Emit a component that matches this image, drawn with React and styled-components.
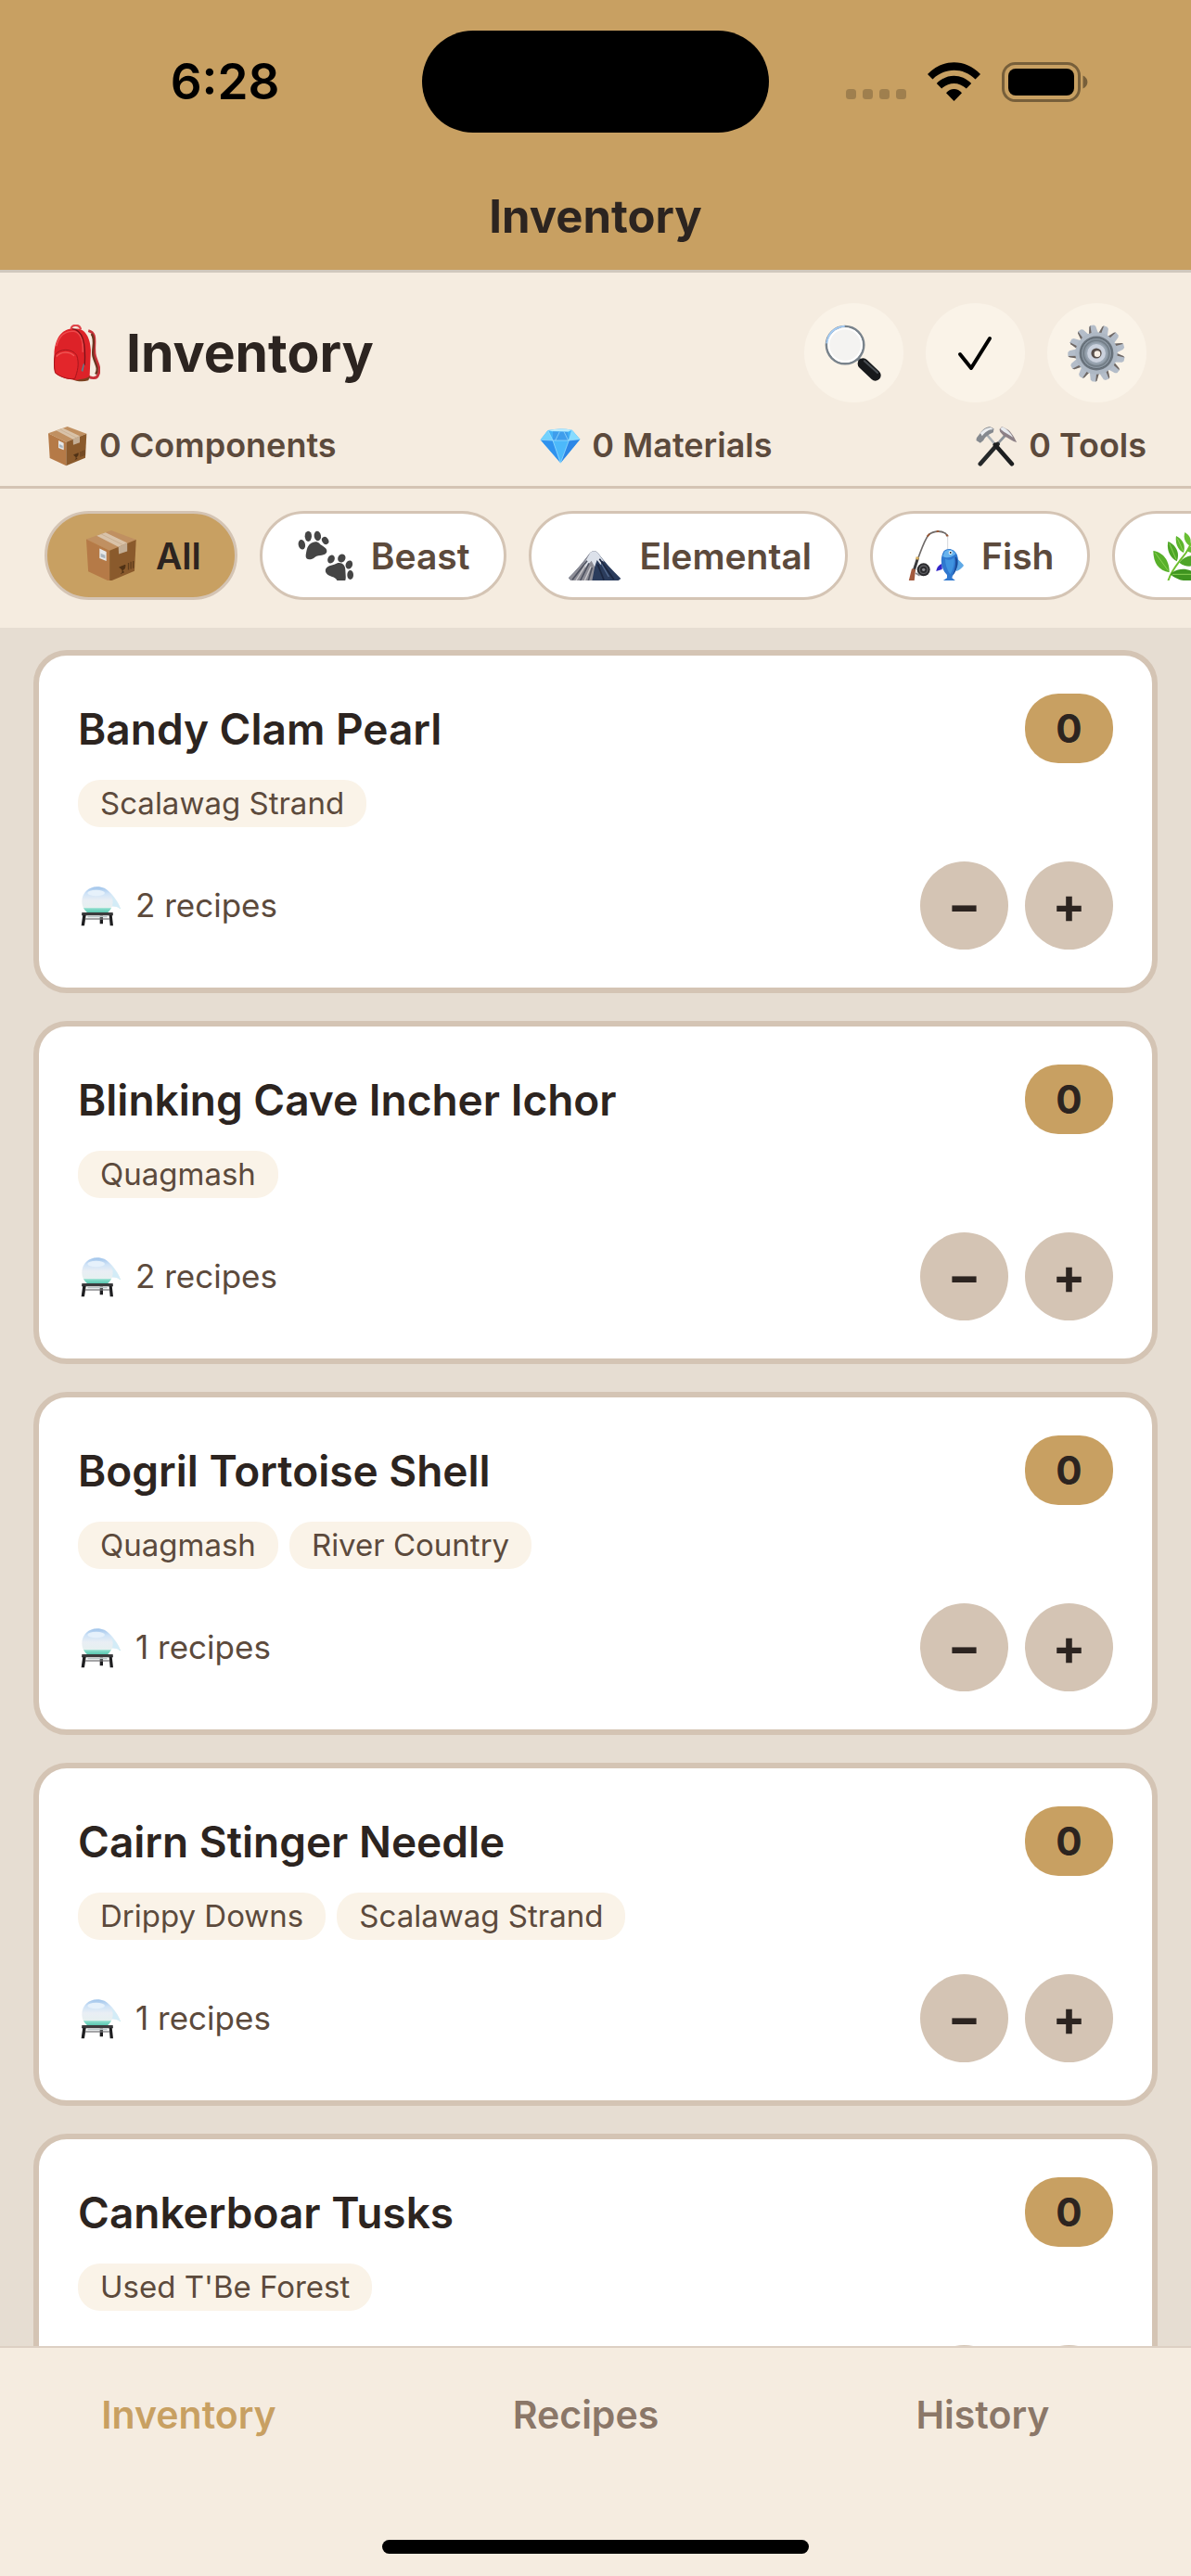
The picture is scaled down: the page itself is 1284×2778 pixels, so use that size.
import React, { useState } from 'react'
import styled, { createGlobalStyle } from 'styled-components'

const GlobalStyle = createGlobalStyle`
  * {
    box-sizing: border-box;
  }

  body {
    margin: 0;
    background-color: #e6ddd2;
    color: #2c2420;
    font-family: Inter, 'Liberation Sans', sans-serif;
  }

  button {
    border: none;
    padding: 0;
    font: inherit;
    color: inherit;
    cursor: pointer;
  }

  svg {
    display: block;
    flex: none;
  }
`

const Screen = styled.div`
  display: flex;
  flex-direction: column;
  height: 100vh;
`

const TopBar = styled.header`
  flex: none;
  background-color: #c8a062;
  border-bottom: 3px solid #d0c8be;
`

const StatusBar = styled.div`
  display: grid;
  grid-template-columns: 1fr 374px 1fr;
  align-items: center;
  height: 176px;
  color: #000;
`

const Clock = styled.span`
  padding-left: 30px;
  text-align: center;
  font-size: 53px;
  font-weight: 600;
  line-height: 60px;
`

const Island = styled.div`
  height: 110px;
  border-radius: 55px;
  background-color: #000;
`

const StatusIcons = styled.div`
  display: flex;
  justify-content: flex-end;
  align-items: center;
  gap: 23px;
  padding-right: 111px;
`

const ScreenTitle = styled.h1`
  margin: 0;
  padding: 28px 0 27px;
  text-align: center;
  font-size: 49px;
  font-weight: 700;
  line-height: 60px;
`

const Summary = styled.section`
  flex: none;
  padding: 33px 48px 21px;
  background-color: #f5ece0;
  border-bottom: 3px solid #d4c4b4;
`

const SummaryRow = styled.div`
  display: flex;
  justify-content: space-between;
  align-items: center;
`

const SummaryTitle = styled.h2`
  display: flex;
  align-items: center;
  gap: 28px;
  margin: 0;
  padding-left: 10px;
  font-size: 57px;
  font-weight: 700;
  line-height: 72px;
`

const Actions = styled.div`
  display: flex;
  gap: 24px;
`

const RoundButton = styled.button`
  display: flex;
  justify-content: center;
  align-items: center;
  width: 107px;
  height: 107px;
  padding-right: 2px;
  border-radius: 50%;
  background-color: #faf3e8;
`

const Stats = styled(SummaryRow)`
  padding: 24px 0 0 3px;
`

const Stat = styled.span`
  display: flex;
  align-items: center;
  gap: 12px;
  color: #5c4a3c;
  font-size: 36px;
  font-weight: 600;
  line-height: 45px;
`

const Filters = styled.nav`
  display: flex;
  flex: none;
  gap: 24px;
  padding: 24px 48px 30px;
  overflow: hidden;
  background-color: #f5ece0;
`

const Pill = styled.button`
  display: flex;
  flex: none;
  align-items: center;
  gap: 15px;
  height: 96px;
  padding: 0 36px;
  border: 3px solid #d4c4b4;
  border-radius: 48px;
  background-color: ${props => (props.$active ? '#c8a062' : '#fff')};
  color: ${props => (props.$active ? '#2c2420' : '#5c4a3c')};
  font-size: 39px;
  font-weight: 600;
`

const List = styled.main`
  display: flex;
  flex: 1;
  flex-direction: column;
  gap: 30px;
  min-height: 0;
  padding: 24px 36px;
  overflow: hidden;
`

const Card = styled.article`
  flex: none;
  padding: 41px 42px;
  border: 6px solid #d4c4b4;
  border-radius: 36px;
  background-color: #fff;
`

const CardRow = styled.div`
  display: flex;
  justify-content: space-between;
  align-items: center;
`

const CardTitle = styled.h3`
  margin: 0;
  font-size: 46px;
  font-weight: 600;
  line-height: 60px;
`

const Count = styled.span`
  min-width: 95px;
  padding: 0 24px;
  border-radius: 36px;
  background-color: #c8a062;
  text-align: center;
  font-size: 42px;
  font-weight: 700;
  line-height: 75px;
`

const Tags = styled.div`
  display: flex;
  gap: 12px;
  padding: 18px 0 37px;
`

const Tag = styled.span`
  padding: 0 24px;
  border-radius: 24px;
  background-color: #faf3e8;
  color: #5c4a3c;
  font-size: 33px;
  line-height: 51px;
`

const Recipes = styled.span`
  display: flex;
  align-items: center;
  gap: 15px;
  padding-left: 3px;
  color: #5c4a3c;
  font-size: 35px;
  line-height: 45px;
`

const Stepper = styled.div`
  display: flex;
  gap: 18px;
`

const StepButton = styled.button`
  width: 95px;
  height: 95px;
  border-radius: 50%;
  background-color: #d4c4b4;
  font-size: 53px;
  font-weight: 700;
  line-height: 95px;
`

const TabBar = styled.nav`
  flex: none;
  padding-top: 42px;
  border-top: 2px solid #ddd0c3;
  background-color: #f5ece0;
`

const Tabs = styled.div`
  display: flex;
`

const TabLink = styled.a`
  flex: 1;
  padding-right: 21px;
  color: ${props => (props.$active ? '#c8a062' : '#8b7768')};
  text-align: center;
  text-decoration: none;
  font-size: 41px;
  font-weight: 600;
  line-height: 60px;
`

const HomeIndicator = styled.div`
  width: 460px;
  height: 15px;
  margin: 105px auto 24px;
  border-radius: 8px;
  background-color: #000;
`

const CellIcon = () => (
  <svg width="65" height="42" viewBox="0 0 65 42" fill="#000" opacity="0.2">
    {[0, 18, 36, 54].map(x => (
      <rect key={x} x={x} y="29" width="11" height="11" rx="3.5" />
    ))}
  </svg>
)

const WifiIcon = () => (
  <svg width="57" height="42" viewBox="0 0 57 42">
    <path d="M0 13C16-4 41-4 57 13L51.500 18.500C38.500 5.500 18.500 5.500 5.500 18.500Z" />
    <path d="M9.800 23C20.500 12 36.500 12 47.200 23L41.800 28.500C34 21 23 21 15.200 28.500Z" />
    <path d="M20 33.200C24.500 27.500 32.500 27.500 37 33.200L28.500 42Z" />
  </svg>
)

const BatteryIcon = () => (
  <svg width="93" height="43" viewBox="0 0 93 43">
    <g opacity="0.4">
      <rect x="1.500" y="1.500" width="82" height="40" rx="13" fill="none" stroke="#000" strokeWidth="3" />
      <path d="M87.500 14.500C94 17 94 26 87.500 28.500Z" />
    </g>
    <rect x="7" y="7" width="71" height="29" rx="8" />
  </svg>
)

const BackpackIcon = () => (
  <svg width="50" height="62" viewBox="0 0 150 187">
    <path d="M112 20C146 28 124 72 134 104C140 126 154 142 143 165C139 176 124 175 114 171" fill="none" stroke="#c8323a" strokeWidth="9" />
    <path d="M122 30C138 50 122 80 128 104C134 128 148 142 136 162" fill="none" stroke="#6b3520" strokeWidth="7" />
    <path d="M56 16C56-2 84-2 87 16" fill="none" stroke="#e0464c" strokeWidth="7" />
    <path d="M62 170L118 166L112 182C92 188 70 184 60 178Z" fill="#7a3f1e" />
    <path d="M1 98C2 50 24 12 64 14C102 8 118 42 120 84L116 168C106 178 88 176 78 180C52 180 20 172 4 158C-1 142 0 118 1 98Z" fill="#dd2228" />
    <path d="M8 70C18 30 44 20 66 22C90 28 96 54 94 90" fill="none" stroke="#ee4a4c" strokeWidth="5" />
    <path d="M60 14C94 18 104 58 100 132" fill="none" stroke="#7c1218" strokeWidth="4" />
    <path d="M4 98C18 78 58 76 74 100C84 128 76 154 68 176C44 180 16 168 4 156C0 138 0 116 4 98Z" fill="#e3262b" stroke="#a5161c" strokeWidth="3" />
    <path d="M8 104C22 88 50 86 66 102" fill="none" stroke="#f05a58" strokeWidth="4" />
    <path d="M96 126L99 130L94 154L89 150Z" fill="#5d7f8c" />
  </svg>
)

const PackageShape = () => (
  <g>
    <path d="M0 22L62 0L124 23L58 50Z" fill="#c09061" />
    <path d="M0 22L58 50V127L5 102Z" fill="#b57a47" />
    <path d="M58 50L124 23L120 101L58 127Z" fill="#8a5a2c" />
    <path d="M26 13L48 5L102 31L80 41Z" fill="#d9c3a9" />
    <path d="M37 9L91 36" stroke="#c9ae90" strokeWidth="2" />
    <path d="M80 41L102 31V52L81 59Z" fill="#c3ad94" />
    <path d="M33 45L50 53V76L33 69Z" fill="#e6e8e9" />
    <path d="M36 57L47 62V70L36 66Z" fill="#a9b4bd" />
    <path d="M82 92L97 86C97 94 94 98 90 99V105L94 104M90 105L86 108" fill="#4f3115" stroke="#4f3115" strokeWidth="2" />
    <path d="M105 81V98M111 78V96M117 76V94" stroke="#5f3d1c" strokeWidth="3" />
  </g>
)

const PackageIcon = () => (
  <svg width="44" height="44" viewBox="-3 -3 132 132">
    <PackageShape />
  </svg>
)

const GemIcon = () => (
  <svg width="44" height="44" viewBox="-2 -10 132 132">
    <path d="M0 36L24 5Q64-4 102 4L128 34L65 111Z" fill="#43b4f8" />
    <path d="M24 5L40 38L0 36Z" fill="#72d2fd" />
    <path d="M24 5Q64-4 102 4L88 10L40 9Z" fill="#b6ebff" />
    <path d="M40 9L88 10L92 38L40 38Z" fill="#3e9dec" />
    <path d="M102 4L128 34L92 38Z" fill="#87dcff" />
    <path d="M0 36L40 38L65 111Z" fill="#2f92ee" />
    <path d="M40 38H92L65 111Z" fill="#4cb9fb" />
    <path d="M92 38L128 34L65 111Z" fill="#2c86e6" />
    <path d="M24 5L40 38L65 111L92 38L102 4M0 36L40 38H92L128 34M62 10L48 38M76 10L90 38" fill="none" stroke="#a4e2ff" strokeWidth="2" />
  </svg>
)

const HammersIcon = () => (
  <svg width="45" height="44" viewBox="0 -2 134 132">
    <path d="M96 28L62 66" stroke="#8b9299" strokeWidth="8" />
    <path d="M70 58L14 122" stroke="#25282a" strokeWidth="14" strokeLinecap="round" />
    <path d="M36 28L68 66" stroke="#aab0b5" strokeWidth="8" />
    <path d="M62 60L116 122" stroke="#1c1e20" strokeWidth="14" strokeLinecap="round" />
    <path d="M2 38L14 22C22 10 34 2 46 2L58 8L56 20L44 26C34 32 28 38 24 46L14 54L1 46Z" fill="#85898f" />
    <path d="M14 22C24 10 36 4 48 4L56 10C40 10 28 20 20 32Z" fill="#eceef0" />
    <path d="M76 10L84 1L94 6C110 12 120 28 132 52C118 48 108 40 100 36L90 32L78 18Z" fill="#8c8086" />
    <path d="M80 6L86 2C102 10 112 22 120 36C108 28 94 22 80 10Z" fill="#e7eaee" />
  </svg>
)

const SearchIcon = () => (
  <svg width="62" height="62" viewBox="0 0 188 188">
    <path d="M108 110L120 122" stroke="#737b82" strokeWidth="12" />
    <path d="M126 128L166 166" stroke="#17191b" strokeWidth="36" strokeLinecap="round" />
    <path d="M130 119L173 158" stroke="#4b5055" strokeWidth="6" strokeLinecap="round" />
    <circle cx="67" cy="67" r="61" fill="#f4f3f1" stroke="#79838c" strokeWidth="8" />
    <path d="M7 62C10 32 30 8 66 5" fill="none" stroke="#a6cdf5" strokeWidth="6" />
    <circle cx="67" cy="67" r="54" fill="none" stroke="#fff" strokeWidth="6" />
  </svg>
)

const CheckIcon = () => (
  <svg width="38" height="38" viewBox="0 0 38 38" fill="none" stroke="#000" strokeWidth="4" strokeLinecap="round" strokeLinejoin="round">
    <path d="M3 20L15 35L35 3" />
  </svg>
)

const GearIcon = () => (
  <svg width="62" height="62" viewBox="0 0 188 188">
    {Array.from({ length: 13 }, (_, i) => (
      <g key={i} transform={`rotate(${i * (360 / 13) - 8} 94 94)`}>
        <path d="M78 34L83 6L87 1H99L104 6L110 34Z" fill="#b4bdc9" />
        <path d="M78 34L83 6L87 1L87 34Z" fill="#6f6763" />
      </g>
    ))}
    <circle cx="94" cy="94" r="69" fill="#aeb8c4" />
    <circle cx="94" cy="94" r="56" fill="#6c757e" />
    <circle cx="94" cy="94" r="50" fill="#8d98a3" stroke="#5d6770" strokeWidth="3" />
    <circle cx="94" cy="94" r="42" fill="none" stroke="#737e88" strokeWidth="5" />
    <circle cx="94" cy="94" r="35" fill="#9aa6b3" />
    <circle cx="94" cy="94" r="30" fill="#cbd2de" />
    <circle cx="94" cy="94" r="17" fill="#574e4a" />
    <circle cx="97" cy="96" r="10" fill="#f8efe5" />
  </svg>
)

const FilterSvg = ({ children }) => (
  <svg width="66" height="54" viewBox="0 0 198 162">
    {children}
  </svg>
)

const AllIcon = () => (
  <FilterSvg>
    <g transform="translate(18 0) scale(1.3)">
      <PackageShape />
    </g>
  </FilterSvg>
)

const PawsIcon = () => (
  <FilterSvg>
    <g fill="#454545">
      <path d="M38 54C46 38 66 32 76 42C84 52 102 54 100 70C94 84 76 78 62 86C48 98 30 96 32 80C34 70 34 64 38 54Z" />
      <ellipse cx="19" cy="46" rx="11" ry="16" transform="rotate(-12 19 46)" />
      <ellipse cx="40" cy="19" rx="11" ry="17" />
      <ellipse cx="70" cy="18" rx="11" ry="16" transform="rotate(-8 70 18)" />
      <ellipse cx="95" cy="33" rx="10" ry="13" transform="rotate(-35 95 33)" />
      <path d="M97 124C104 112 122 114 134 106C148 102 160 112 160 128C160 142 164 154 158 166H134C132 148 108 152 98 138C95 134 95 128 97 124Z" />
      <ellipse cx="114" cy="93" rx="11" ry="14" transform="rotate(25 114 93)" />
      <ellipse cx="148" cy="90" rx="12" ry="14" transform="rotate(30 148 90)" />
      <ellipse cx="172" cy="111" rx="11" ry="14" transform="rotate(20 172 111)" />
      <ellipse cx="176" cy="144" rx="10" ry="15" />
    </g>
  </FilterSvg>
)

const MountainIcon = () => (
  <FilterSvg>
    <path d="M12 154C36 130 58 104 82 72Q94 62 106 72C128 102 154 130 181 156L172 163H20Z" fill="#2b3c5c" />
    <path d="M12 154C36 130 58 104 82 72Q94 62 104 70L98 110L88 163H20Z" fill="#8d8d96" />
    <path d="M82 72Q94 62 106 72L128 102L120 98L116 112L104 96L96 118L86 98L66 120L60 112Z" fill="#dce1ea" />
    <path d="M72 98L24 160M78 106L50 162M88 120L76 162" stroke="#4f5361" strokeWidth="5" fill="none" />
    <path d="M68 110L36 162M84 118L64 162" stroke="#c9c8cc" strokeWidth="4" fill="none" />
    <path d="M112 92L158 158M106 110L126 160" stroke="#1c2740" strokeWidth="5" fill="none" />
    <path d="M118 108L142 150" stroke="#566c90" strokeWidth="4" fill="none" />
  </FilterSvg>
)

const FishingIcon = () => (
  <FilterSvg>
    <path d="M36 96C48 66 58 32 72 15C88 0 122-2 134 18" fill="none" stroke="#6f6a68" strokeWidth="5" />
    <path d="M68 20L76 11M98 3H106M130 14L135 20" stroke="#9a5a38" strokeWidth="6" />
    <path d="M134 18V64" stroke="#bfc4c9" strokeWidth="2" />
    <path d="M38 88L24 132" stroke="#3a3a3d" strokeWidth="9" />
    <path d="M37 86L35 94" stroke="#d8b060" strokeWidth="10" />
    <path d="M18 124L30 126L26 164H8Z" fill="#a35a3e" />
    <circle cx="56" cy="127" r="21" fill="#2b2b2e" />
    <circle cx="56" cy="127" r="13" fill="none" stroke="#5e5e62" strokeWidth="4" />
    <circle cx="56" cy="127" r="5" fill="#8b8b90" />
    <path d="M30 138L44 146" stroke="#8a8a8e" strokeWidth="6" />
    <path d="M116 108C102 112 98 124 97 132L116 126Z" fill="#3326c9" />
    <path d="M166 92C176 102 184 108 186 114C178 124 170 130 162 132Z" fill="#5fa9e6" />
    <path d="M122 66C136 54 156 60 164 78C174 102 164 130 150 146L148 154L160 163H118L132 154V144C114 128 106 92 122 66Z" fill="#2f78cf" />
    <path d="M124 68C136 58 152 60 160 76C146 90 130 90 118 84Z" fill="#66b3ee" />
    <path d="M126 92C138 98 150 94 154 88C158 108 150 132 142 142C132 128 126 110 126 92Z" fill="#3f93e0" />
    <path d="M162 86C172 106 162 132 150 146C158 126 162 106 158 86Z" fill="#1b4b98" />
    <circle cx="143" cy="72" r="6" fill="#fff" />
    <circle cx="143" cy="72" r="3" fill="#123" />
  </FilterSvg>
)

const HerbIcon = () => (
  <FilterSvg>
    <path d="M64 164C74 126 108 92 122 72C136 50 146 26 158 0" fill="none" stroke="#6fc02f" strokeWidth="6" />
    <path d="M16 66C42 70 68 90 68 136C34 130 16 106 16 66Z" fill="#58b02a" />
    <path d="M64 36C88 46 104 72 92 100C72 90 58 66 64 36Z" fill="#4da526" />
    <path d="M90 18C110 28 122 46 114 72C96 64 86 42 90 18Z" fill="#5cb52c" />
    <path d="M118 6C134 16 142 30 134 50C120 42 112 26 118 6Z" fill="#68bf34" />
    <path d="M72 142C92 118 140 120 164 150C140 170 96 166 72 142Z" fill="#3f9420" />
    <path d="M100 104C122 78 150 76 178 92C160 118 124 124 100 104Z" fill="#4ea528" />
    <path d="M124 66C140 44 160 38 184 46C174 70 146 80 124 66Z" fill="#66bb32" />
    <path d="M140 32C150 14 164 4 184 6C178 24 160 36 140 32Z" fill="#74c83c" />
    <path d="M22 72L64 130M68 42L90 94M94 26L112 66M78 142H152" stroke="#8ad055" strokeWidth="3" />
  </FilterSvg>
)

const AlembicIcon = () => (
  <svg width="44" height="44" viewBox="0 -2 132 132">
    <defs>
      <linearGradient id="glass" x1="0" y1="0" x2="0" y2="1">
        <stop offset="0" stopColor="#9fc3ea" />
        <stop offset="0.250" stopColor="#cfe3f7" />
        <stop offset="0.500" stopColor="#e9eef4" />
        <stop offset="0.760" stopColor="#e6f0f0" />
        <stop offset="0.800" stopColor="#8addcc" />
        <stop offset="1" stopColor="#45bda4" />
      </linearGradient>
    </defs>
    <path d="M28 90C14 82 4 68 4 50C4 22 26 2 53 2C72 2 84 9 94 20C108 34 124 54 129 74C122 68 112 65 101 66C96 78 88 86 80 90Z" fill="url(#glass)" />
    <ellipse cx="50" cy="22" rx="28" ry="10" fill="#e6f1fb" />
    <path d="M96 24C110 38 124 56 129 74C122 68 112 65 102 65C106 50 104 36 96 24Z" fill="#d3ecf7" />
    <path d="M4 85H104L105 95H3Z" fill="#3b3b3d" />
    <path d="M7 92L2 128H12L17 94M92 94L95 128H105L101 92M62 96V122H72V96" fill="#1d1d1f" />
    <path d="M14 106H94" stroke="#77787b" strokeWidth="4" />
    <path d="M22 99H86" stroke="#b9c6c8" strokeWidth="4" />
  </svg>
)

const stats = [
  { icon: PackageIcon, text: '0 Components' },
  { icon: GemIcon, text: '0 Materials' },
  { icon: HammersIcon, text: '0 Tools' }
]

const filters = [
  { name: 'All', icon: AllIcon },
  { name: 'Beast', icon: PawsIcon },
  { name: 'Elemental', icon: MountainIcon },
  { name: 'Fish', icon: FishingIcon },
  { name: '', icon: HerbIcon }
]

const initialItems = [
  { name: 'Bandy Clam Pearl', places: ['Scalawag Strand'], recipes: 2, count: 0 },
  { name: 'Blinking Cave Incher Ichor', places: ['Quagmash'], recipes: 2, count: 0 },
  { name: 'Bogril Tortoise Shell', places: ['Quagmash', 'River Country'], recipes: 1, count: 0 },
  { name: 'Cairn Stinger Needle', places: ['Drippy Downs', 'Scalawag Strand'], recipes: 1, count: 0 },
  { name: 'Cankerboar Tusks', places: ["Used T'Be Forest"], recipes: 1, count: 0 }
]

const ItemCard = ({ item, onChange }) => (
  <Card>
    <CardRow>
      <CardTitle>{item.name}</CardTitle>
      <Count>{item.count}</Count>
    </CardRow>
    <Tags>
      {item.places.map(place => (
        <Tag key={place}>{place}</Tag>
      ))}
    </Tags>
    <CardRow>
      <Recipes>
        <AlembicIcon />
        {item.recipes} recipes
      </Recipes>
      <Stepper>
        <StepButton aria-label={`Remove ${item.name}`} onClick={() => onChange(-1)}>
          −
        </StepButton>
        <StepButton aria-label={`Add ${item.name}`} onClick={() => onChange(1)}>
          +
        </StepButton>
      </Stepper>
    </CardRow>
  </Card>
)

export default function App() {
  const [filter, setFilter] = useState('All')
  const [items, setItems] = useState(initialItems)

  const changeCount = (name, step) =>
    setItems(items.map(item => (item.name === name ? { ...item, count: Math.max(0, item.count + step) } : item)))

  return (
    <>
      <GlobalStyle />
      <Screen>
        <TopBar>
          <StatusBar>
            <Clock>6:28</Clock>
            <Island />
            <StatusIcons>
              <CellIcon />
              <WifiIcon />
              <BatteryIcon />
            </StatusIcons>
          </StatusBar>
          <ScreenTitle>Inventory</ScreenTitle>
        </TopBar>
        <Summary>
          <SummaryRow>
            <SummaryTitle>
              <BackpackIcon />
              Inventory
            </SummaryTitle>
            <Actions>
              <RoundButton aria-label="Search">
                <SearchIcon />
              </RoundButton>
              <RoundButton aria-label="Select">
                <CheckIcon />
              </RoundButton>
              <RoundButton aria-label="Settings">
                <GearIcon />
              </RoundButton>
            </Actions>
          </SummaryRow>
          <Stats>
            {stats.map(({ icon: Icon, text }) => (
              <Stat key={text}>
                <Icon />
                {text}
              </Stat>
            ))}
          </Stats>
        </Summary>
        <Filters>
          {filters.map(({ name, icon: Icon }) => (
            <Pill key={name} aria-label={name || 'Plant'} $active={name === filter} onClick={() => setFilter(name)}>
              <Icon />
              {name}
            </Pill>
          ))}
        </Filters>
        <List>
          {items.map(item => (
            <ItemCard key={item.name} item={item} onChange={step => changeCount(item.name, step)} />
          ))}
        </List>
        <TabBar>
          <Tabs>
            <TabLink href="#inventory" $active>
              Inventory
            </TabLink>
            <TabLink href="#recipes">Recipes</TabLink>
            <TabLink href="#history">History</TabLink>
          </Tabs>
          <HomeIndicator />
        </TabBar>
      </Screen>
    </>
  )
}
